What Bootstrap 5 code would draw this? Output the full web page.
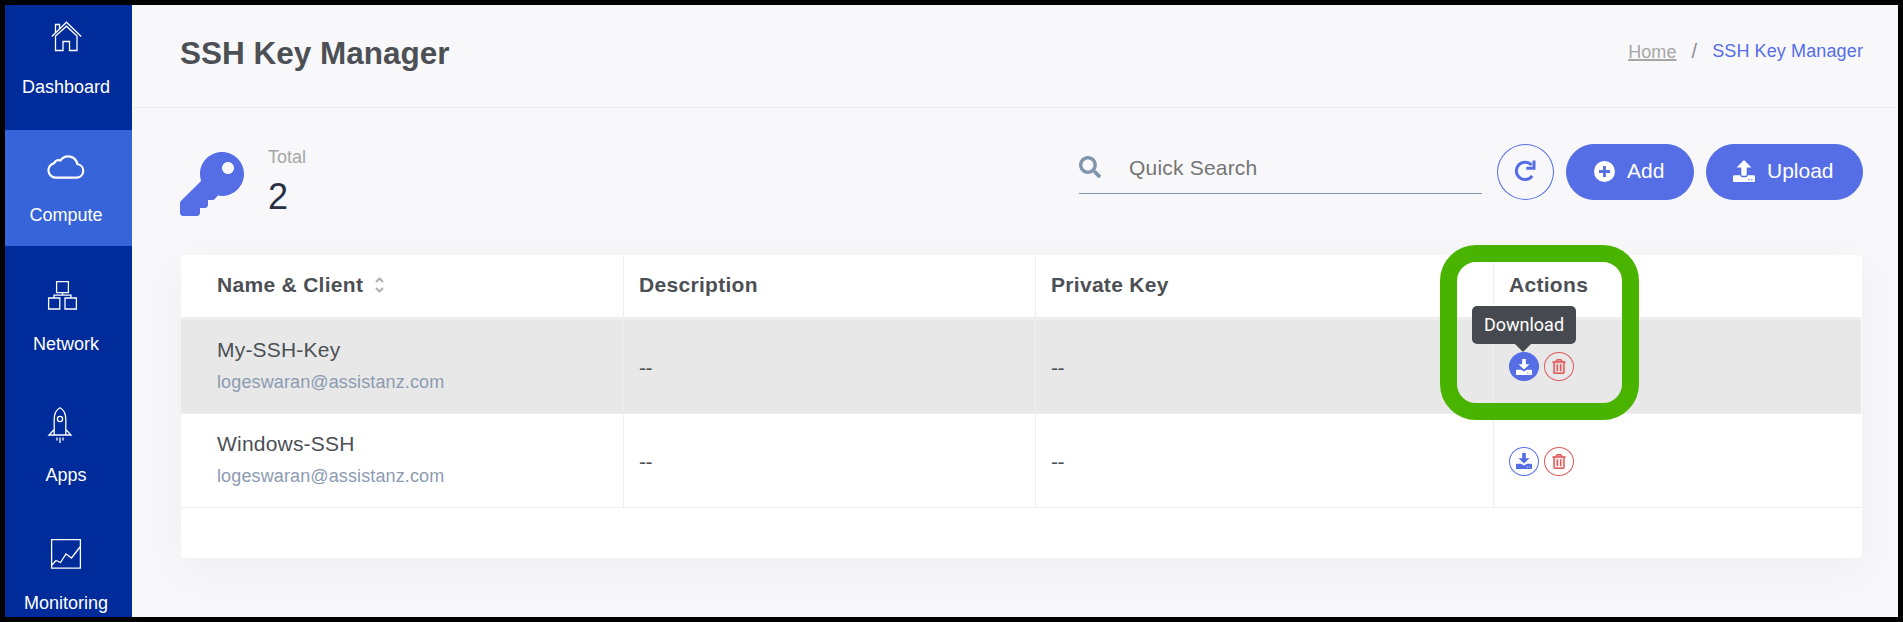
<!DOCTYPE html>
<html lang="en">
<head>
<meta charset="utf-8">
<meta name="viewport" content="width=device-width, initial-scale=1">
<title>SSH Key Manager</title>
<link href="https://cdn.jsdelivr.net/npm/bootstrap@5.3.0/dist/css/bootstrap.min.css" rel="stylesheet">
<style>
body{font-family:"Liberation Sans",Arial,sans-serif;font-size:18px;background:#f8f8fb;color:#4c5055}
.app-frame{height:100vh;border:5px solid #000;overflow:hidden}
svg{display:block;overflow:visible}
.side{width:127px;background:#002b9a;overflow:hidden}
.side-item{color:#fff;text-decoration:none;line-height:20px;padding-right:5px}
.side-item.active{background:#3864d9}
.side-item svg{fill:none;stroke:#fff;stroke-width:1.3}
.page-head{height:103px;padding:0 35px 0 48px;border-bottom:1px solid #e9eaee}
.page-title{font-size:31.5px;font-weight:700;line-height:36px;margin:30px 0 0}
.crumbs{margin-top:36px;line-height:20px}
.crumbs a{color:#a6a6a6;letter-spacing:.1px;text-decoration-thickness:2px}
.crumbs .active{color:#556ee6;letter-spacing:.12px}
.content-area{padding:0 35px 0 48px}
.total-label{color:#a6a6a6;line-height:20px}
.total-num{color:#2a3042;font-size:36px;line-height:40px;margin-top:10px}
.search-box{width:403px;height:56px;border-bottom:1px solid #8094ae}
.search-box input{border:0;background:transparent;font-size:21px;letter-spacing:.2px;outline:0;color:#757575;padding:0;width:340px}
.search-box input::placeholder{color:#757575;opacity:1}
.btn-main{--bs-btn-bg:#556ee6;--bs-btn-color:#fff;--bs-btn-border-color:#556ee6;--bs-btn-hover-bg:#485ec4;--bs-btn-hover-color:#fff;height:56px;font-size:21px;line-height:24px}
.btn-main span{margin-top:-2px}
.btn-main svg{margin-top:-2px}
.btn-ring{width:57px;height:56px;border:1px solid #556ee6;color:#556ee6}
.keys-card{margin:39px 0 0 1px;height:303px;border:0;border-radius:4px;box-shadow:0 12px 50px rgba(30,30,30,.045);width:1681px}
.keys{table-layout:fixed;width:1680px;border-collapse:separate;border-spacing:0}
.keys th,.keys td{border-right:1px solid #eee;padding:0 0 0 15px;font-size:21px}
.keys th:first-child,.keys td:first-child{padding-left:36px}
.keys th:last-child,.keys td:last-child{border-right:0}
.keys th{height:65px;border-bottom:3px solid #eee;letter-spacing:.3px;line-height:24px;padding-bottom:2px;vertical-align:middle}
.keys td{height:94px;border-bottom:1px solid #eee;vertical-align:middle;letter-spacing:.2px}
.keys tr.hovered td{background:#e8e8e8}
.key-name{line-height:24px;margin-top:-4px}
.key-mail{font-size:18px;line-height:20px;color:#8c9bb1;letter-spacing:.12px;margin-top:10px;display:block}
.dashes{letter-spacing:-.6px;padding-top:2px;display:block}
.act{width:30px;height:29px;border:1px solid #556ee6;color:#556ee6;background:#fff;padding:0}
.act.on{background:#556ee6;color:#fff}
.act.del{border-color:#e05a5a;color:#e05a5a;background:transparent}
.tip{top:-46px;left:-37px;width:104px;height:38px;background:#464a50;color:#fff;border-radius:5px;font:18px/38px Roboto,sans-serif;letter-spacing:0;text-align:center;z-index:3}
.tip::after{content:"";position:absolute;top:37px;left:42px;border:9.5px solid transparent;border-top-color:#464a50;border-bottom:0}
.callout-ring{top:-10px;left:1259px;width:199px;height:175px;border:17px solid #49b400;border-radius:36px;z-index:2;pointer-events:none}
</style>
</head>
<body>
<svg width="0" height="0" class="position-absolute">
<defs>
<symbol id="i-down" viewBox="0 0 16 16"><path fill="currentColor" d="M6.200 0h3.600v5.300h3.700L8 10.500 2.500 5.300h3.700zM.6 10.800h4.300L8 12.600l3.100-1.800h4.300q.6 0 .6.6v4q0 .6-.6.6H.6q-.6 0-.6-.6v-4q0-.6.6-.6zM11 13.700v.9h1v-.9zm2 0v.9h1v-.9z" fill-rule="evenodd"/></symbol>
<symbol id="i-trash" viewBox="0 0 448 512"><path fill="currentColor" stroke="currentColor" stroke-width="8" d="M268 416h24a12 12 0 0 0 12-12V188a12 12 0 0 0-12-12h-24a12 12 0 0 0-12 12v216a12 12 0 0 0 12 12zM432 80h-82.410l-34-56.700A48 48 0 0 0 274.410 0H173.590a48 48 0 0 0-41.160 23.300L98.410 80H16A16 16 0 0 0 0 96v16a16 16 0 0 0 16 16h16v336a48 48 0 0 0 48 48h288a48 48 0 0 0 48-48V128h16a16 16 0 0 0 16-16V96a16 16 0 0 0-16-16zM171.840 50.910A6 6 0 0 1 177 48h94a6 6 0 0 1 5.150 2.910L293.610 80H154.390zM368 464H80V128h288zm-212-48h24a12 12 0 0 0 12-12V188a12 12 0 0 0-12-12h-24a12 12 0 0 0-12 12v216a12 12 0 0 0 12 12z"/></symbol>
</defs>
</svg>
<div class="app-frame d-flex">
  <nav class="side flex-shrink-0 d-flex flex-column text-center">
    <a href="#" class="side-item d-flex flex-column align-items-center flex-shrink-0" style="height:125px;padding-top:16px">
      <svg width="31" height="31" viewBox="0 0 31 31"><path d="M.8 15.500 15.500 1.200 30.200 15.500M4.500 11.500V3.500h4v4M4.500 15v14.500h7.500v-9h6.500v9h7.500V15L15.500 5.200z"/></svg>
      <span style="margin-top:25px">Dashboard</span>
    </a>
    <a href="#" class="side-item active d-flex flex-column align-items-center flex-shrink-0" style="height:116px;padding-top:24px">
      <svg width="38" height="25" viewBox="0 0 38 25"><path stroke-width="2.200" d="M8.500 23.700a7.400 7.400 0 0 1-1.300-14.600 5.300 5.300 0 0 1 6.300-2.600A9.300 9.300 0 0 1 30.300 10a6.900 6.900 0 0 1-.3 13.700z"/></svg>
      <span style="margin-top:25px;line-height:22px">Compute</span>
    </a>
    <a href="#" class="side-item d-flex flex-column align-items-center flex-shrink-0" style="height:129px;padding-top:35px">
      <svg width="29" height="29" viewBox="0 0 29 29" style="margin-right:7px"><path d="M8.600.6h11.800v11H8.600zM.6 17h11.200v11H.6zM17 17h11.400v11H17zM14.500 11.600v2.600M6 17v-2.800h17V17"/></svg>
      <span style="margin-top:24px">Network</span>
    </a>
    <a href="#" class="side-item d-flex flex-column align-items-center flex-shrink-0" style="height:129px;padding-top:32px">
      <svg width="24" height="36" viewBox="0 0 24 36" style="margin-right:12px"><path d="M6.200 28V12Q6.200 4 12 .8 17.800 4 17.800 12v16zM6.200 22.500 1 28h22l-5.200-5.500M9 30.500v3M12 30.500v5.500M15 30.500v3"/><circle cx="12" cy="12" r="2.600"/></svg>
      <span style="margin-top:22px">Apps</span>
    </a>
    <a href="#" class="side-item d-flex flex-column align-items-center flex-shrink-0" style="height:125px;padding-top:35px">
      <svg width="30" height="30" viewBox="0 0 30 30"><path d="M.6.6h28.800v28.500H.6zM1 26l4-4.500 4.500 2L15 15l5.500 4L29 8"/></svg>
      <span style="margin-top:24px">Monitoring</span>
    </a>
  </nav>
  <main class="flex-grow-1">
    <header class="page-head d-flex justify-content-between">
      <h1 class="page-title">SSH Key Manager</h1>
      <div class="crumbs d-flex"><a href="#" style="padding-top:1px">Home</a><span style="color:#8b8b8b;margin:0 15px;font-size:20px">/</span><span class="active">SSH Key Manager</span></div>
    </header>
    <div class="content-area">
      <div class="d-flex" style="padding-top:36px;height:108px">
        <svg width="64" height="64" viewBox="0 0 512 512" style="margin-top:8px"><path fill="#556ee6" d="M512 176c0 97.200-78.800 176-176 176-11.220 0-22.190-1.062-32.830-3.070l-24.010 27.010A24 24 0 0 1 261.220 384H224v40c0 13.255-10.745 24-24 24h-40v40c0 13.255-10.745 24-24 24H24c-13.255 0-24-10.745-24-24v-78.060c0-6.365 2.529-12.470 7.029-16.970l161.802-161.802C163.108 213.814 160 195.271 160 176 160 78.798 238.797 0 336 0 433.488 0 512 78.511 512 176zM336 128c0 26.510 21.490 48 48 48s48-21.490 48-48-21.490-48-48-48-48 21.490-48 48z"/></svg>
        <div style="margin-left:24px;padding-top:3px"><div class="total-label">Total</div><div class="total-num">2</div></div>
        <div class="d-flex ms-auto">
          <div class="search-box d-flex" style="margin-top:-6px">
            <svg width="22" height="22" viewBox="0 0 512 512" style="margin-top:18px"><path fill="#8094ae" d="M505 442.700 405.300 343c-4.500-4.500-10.600-7-17-7H372c27.600-35.300 44-79.700 44-128C416 93.100 322.900 0 208 0S0 93.100 0 208s93.100 208 208 208c48.300 0 92.700-16.400 128-44v16.300c0 6.400 2.500 12.500 7 17l99.700 99.700c9.400 9.400 24.600 9.400 33.900 0l28.300-28.300c9.400-9.400 9.400-24.600.1-34zM208 336c-70.700 0-128-57.200-128-128 0-70.700 57.200-128 128-128 70.700 0 128 57.200 128 128 0 70.700-57.200 128-128 128z"/></svg>
            <input type="text" placeholder="Quick Search" aria-label="Quick Search" style="margin-left:28px;height:24px;margin-top:18px">
          </div>
          <button class="btn btn-ring rounded-circle d-flex align-items-center justify-content-center p-0" style="margin-left:15px" aria-label="Refresh"><svg width="22" height="22" viewBox="0 0 22 22" style="margin:-2px 1px 0 0"><path fill="none" stroke="currentColor" stroke-width="3" d="M18.200 15.800A8.700 8.700 0 1 1 17.500 5"/><path fill="currentColor" d="M18.500.5h3v9.200h-9.200V6.700h6.200z"/></svg></button>
          <button class="btn btn-main rounded-pill d-flex align-items-center p-0" style="margin-left:12px;width:128px"><svg width="21" height="21" viewBox="0 0 21 21" style="margin-left:27px;margin-right:12px"><circle cx="10.500" cy="10.500" r="10.500" fill="#fff"/><path stroke="#556ee6" stroke-width="2.800" d="M10.500 5v11M5 10.500h11"/></svg><span>Add</span></button>
          <button class="btn btn-main rounded-pill d-flex align-items-center p-0" style="margin-left:12px;width:157px"><svg width="22" height="22" viewBox="0 0 22 22" style="margin-left:26px;margin-right:12px"><path fill="#fff" fill-rule="evenodd" d="M8.300 7.500H3.600L11 0l7.400 7.500h-4.700v7q0 1.300-1.300 1.300H9.600q-1.300 0-1.300-1.300zM1 15.200h6.200q.3 2 2.400 2h2.800q2.100 0 2.400-2H21q1 0 1 1V21q0 1-1 1H1q-1 0-1-1v-4.800q0-1 1-1zM15.200 19v1.200h1.300V19zm3 0v1.200h1.300V19z"/></svg><span>Upload</span></button>
        </div>
      </div>
      <section class="keys-card card">
        <table class="keys">
          <colgroup><col style="width:443px"><col style="width:412px"><col style="width:458px"><col></colgroup>
          <thead><tr>
            <th><span class="d-flex align-items-center">Name &amp; Client<svg width="9" height="16" viewBox="0 0 9 16" style="margin-left:12px"><path fill="none" stroke="#b0b0b0" stroke-width="2" d="M1 5l3.500-3.500L8 5M1 11l3.500 3.500L8 11"/></svg></span></th>
            <th>Description</th><th>Private Key</th><th>Actions</th>
          </tr></thead>
          <tbody>
            <tr class="hovered"><td><div class="key-name">My-SSH-Key</div><span class="key-mail">logeswaran@assistanz.com</span></td><td><span class="dashes">--</span></td><td><span class="dashes">--</span></td>
              <td><div class="d-flex" style="gap:5px"><div class="position-relative"><button class="act on rounded-circle d-flex align-items-center justify-content-center"><svg width="16" height="16"><use href="#i-down"/></svg></button><div class="tip position-absolute">Download</div></div><button class="act del rounded-circle d-flex align-items-center justify-content-center"><svg width="14" height="15"><use href="#i-trash"/></svg></button></div></td></tr>
            <tr><td><div class="key-name">Windows-SSH</div><span class="key-mail">logeswaran@assistanz.com</span></td><td><span class="dashes">--</span></td><td><span class="dashes">--</span></td>
              <td><div class="d-flex" style="gap:5px;padding-top:1px"><button class="act rounded-circle d-flex align-items-center justify-content-center"><svg width="16" height="16"><use href="#i-down"/></svg></button><button class="act del rounded-circle d-flex align-items-center justify-content-center"><svg width="14" height="15"><use href="#i-trash"/></svg></button></div></td></tr>
          </tbody>
        </table>
        <div class="callout-ring position-absolute"></div>
      </section>
    </div>
  </main>
</div>
<script src="https://cdn.jsdelivr.net/npm/bootstrap@5.3.0/dist/js/bootstrap.bundle.min.js"></script>
</body>
</html>
